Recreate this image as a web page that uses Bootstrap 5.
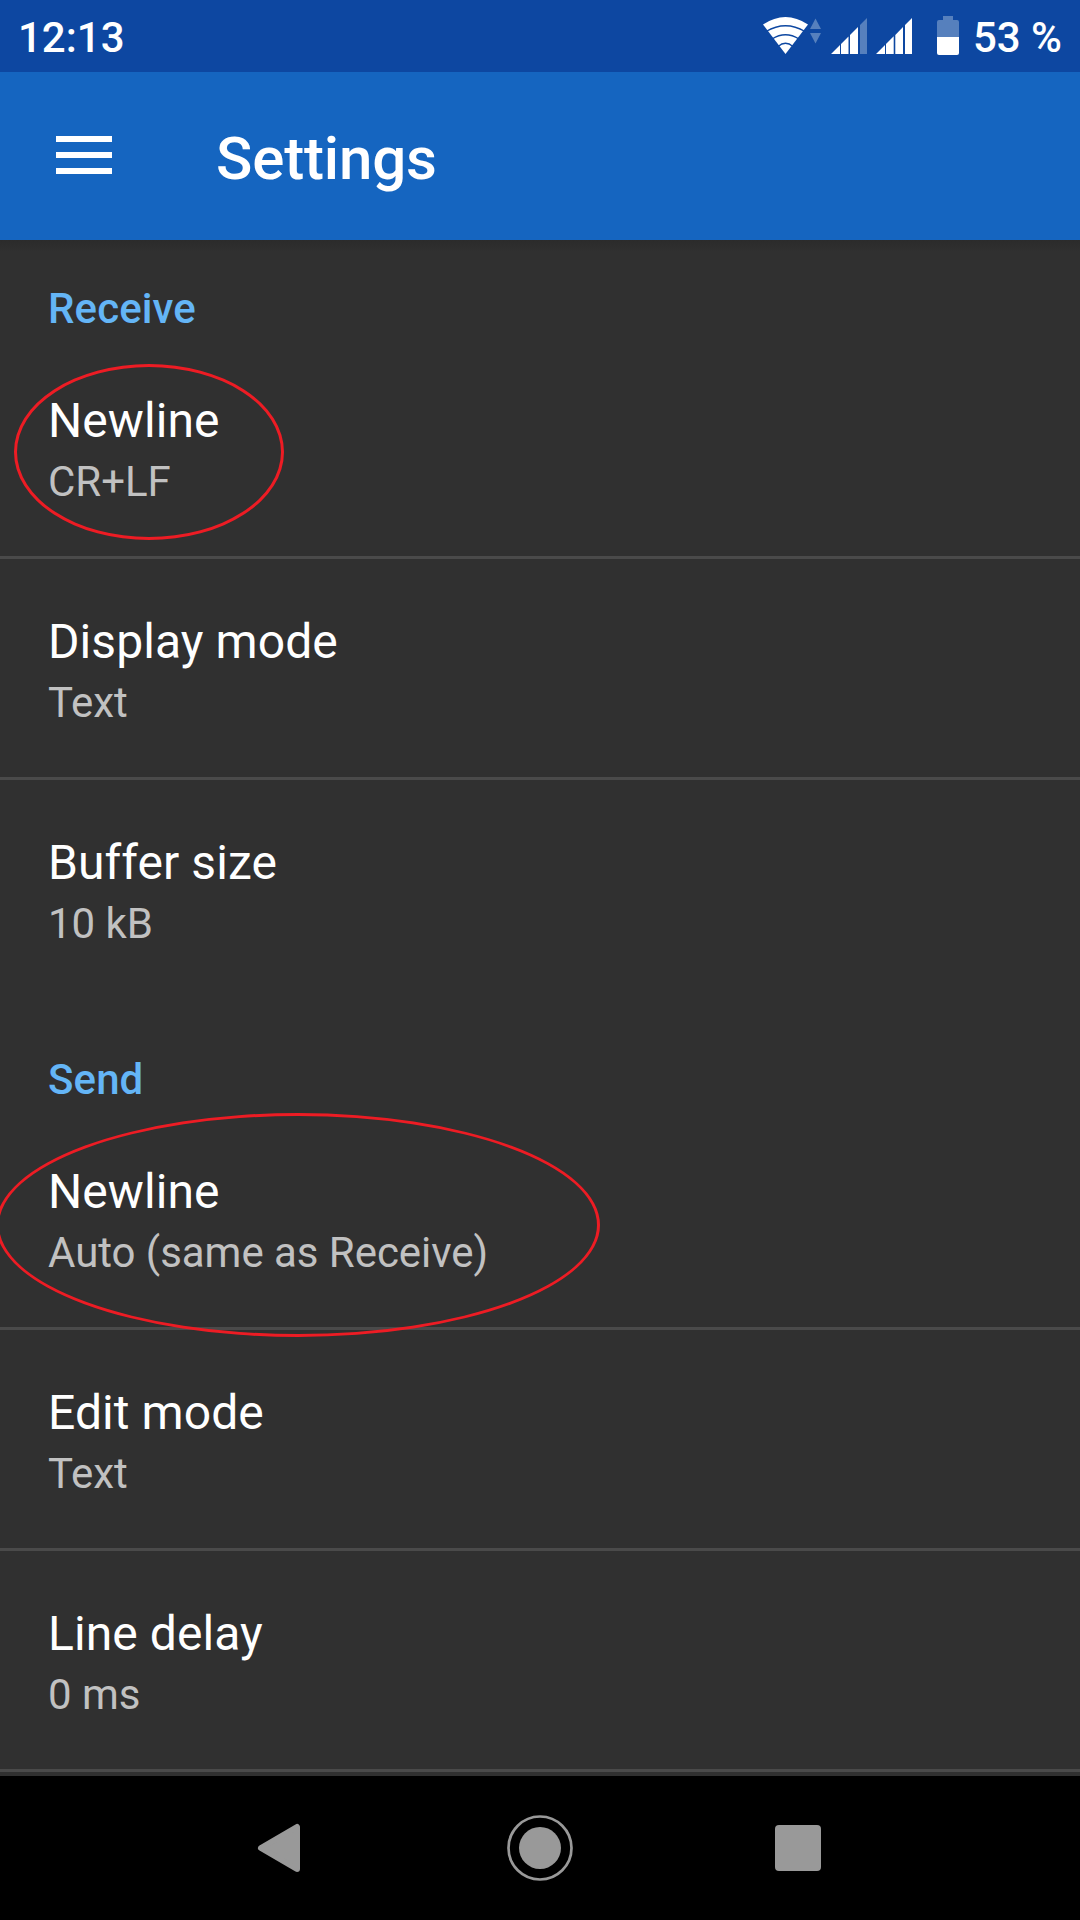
<!DOCTYPE html>
<html lang="en" data-bs-theme="dark">
<head>
<meta charset="utf-8">
<meta name="viewport" content="width=device-width, initial-scale=1">
<title>Settings</title>
<link href="https://cdn.jsdelivr.net/npm/bootstrap@5.3.0/dist/css/bootstrap.min.css" rel="stylesheet">
<style>
body { font-family: Roboto, "Liberation Sans", sans-serif; background: #303030; color: #fff; }
.screen { width: 1080px; height: 1920px; }
.status-bar { height: 72px; background: #0d47a1; font-size: 42px; line-height: 50px; font-weight: 500; padding: 0 18px; }
.status-bar span { padding-top: 4px; }
.status-bar svg { width: 215px; height: 72px; margin-right: 3px; }
.app-bar { height: 168px; background: #1565c0; padding: 0 56px; gap: 104px; }
.app-bar h1 { font-size: 60px; line-height: 72px; font-weight: 500; padding-top: 5px; letter-spacing: -.15px; }
.menu-btn { width: 56px; height: 38px; margin-top: -2px; }
.settings-pane { background: linear-gradient(#2b2b2b, #303030 12px); }
.group-title { color: #64b5f6; font-size: 42px; line-height: 57px; font-weight: 500; letter-spacing: .1px; padding: 53px 48px 1px; }
.first-group { padding-top: 40px; }
.list-group-flush > .setting.list-group-item { height: 221px; padding: 51px 48px 0; background: transparent; border: 0 solid #4a4a4a; border-bottom-width: 3px; color: #fff; }
.list-group-flush > .group-end.list-group-item { height: 218px; border-bottom-width: 0; }
.setting-name { font-size: 48px; line-height: 64px; letter-spacing: .08px; }
.setting-value { font-size: 42px; line-height: 57px; color: #c1c1c1; letter-spacing: -.04px; }
.marker { border: 3px solid #ed1c24; border-radius: 50%; pointer-events: none; }
.marker-receive { left: 14px; top: 26px; width: 270px; height: 176px; }
.marker-send { left: -4px; top: 4px; width: 604px; height: 224px; }
.nav-keys { height: 144px; background: #000; }
.nav-keys svg { width: 72px; height: 72px; }
.nav-keys .d-flex { gap: 184px; }
</style>
</head>
<body>
<div class="screen d-flex flex-column overflow-hidden">
  <header class="status-bar d-flex align-items-center justify-content-between flex-shrink-0">
    <span>12:13</span>
    <div class="d-flex align-items-center">
      <svg viewBox="755 0 215 72" aria-hidden="true">
        <path fill="#fff" d="M763 24.5Q785.500 9.500 808 24.500L785.500 54Z"/>
        <g fill="none" stroke="#0d47a1" stroke-width="1.300"><path d="M766 31.500Q785.500 20 805 31.500"/><path d="M772 39Q785.500 30.500 799 39"/><path d="M778 46.500Q785.500 40 793 46.500"/></g>
        <path fill="#5680bd" d="M810 29L815.500 18.500 821 29ZM810 33H821L815.500 43.500Z"/>
        <path fill="#fff" d="M831 54L840 45V54ZM841 54V44L848.500 36.500V54ZM850 54V35L858 27V54Z"/>
        <path fill="#5680bd" d="M860 54V25L867 18V54Z"/>
        <path fill="#fff" d="M876 54L885 45V54ZM886 54V44L893.700 36.300V54ZM895.300 54V35L903 27V54ZM905 54V25L912 18V54Z"/>
        <path fill="#5680bd" d="M937 37V22Q937 20 939 20H943V16H953V20H957Q959 20 959 22V37Z"/>
        <path fill="#fff" d="M937 37H959V53Q959 55 957 55H939Q937 55 937 53Z"/>
      </svg>
      <span>53 %</span>
    </div>
  </header>
  <nav class="app-bar d-flex align-items-center flex-shrink-0">
    <button class="menu-btn btn p-0 border-0 d-flex" aria-label="Menu">
      <svg width="56" height="38" viewBox="0 0 56 38" fill="#fff"><path d="M0 0H56V6H0ZM0 16H56V22H0ZM0 32H56V38H0Z"/></svg>
    </button>
    <h1 class="mb-0">Settings</h1>
  </nav>
  <main class="settings-pane flex-grow-1 overflow-hidden">
    <h2 class="group-title first-group mb-0">Receive</h2>
    <div class="list-group list-group-flush">
      <div class="setting list-group-item position-relative">
        <div class="setting-name">Newline</div>
        <div class="setting-value">CR+LF</div>
        <div class="marker marker-receive position-absolute"></div>
      </div>
      <div class="setting list-group-item">
        <div class="setting-name">Display mode</div>
        <div class="setting-value">Text</div>
      </div>
      <div class="setting group-end list-group-item">
        <div class="setting-name">Buffer size</div>
        <div class="setting-value">10 kB</div>
      </div>
    </div>
    <h2 class="group-title mb-0">Send</h2>
    <div class="list-group list-group-flush">
      <div class="setting list-group-item position-relative z-1">
        <div class="setting-name">Newline</div>
        <div class="setting-value">Auto (same as Receive)</div>
        <div class="marker marker-send position-absolute"></div>
      </div>
      <div class="setting list-group-item">
        <div class="setting-name">Edit mode</div>
        <div class="setting-value">Text</div>
      </div>
      <div class="setting list-group-item">
        <div class="setting-name">Line delay</div>
        <div class="setting-value">0 ms</div>
      </div>
    </div>
  </main>
  <footer class="nav-keys d-flex align-items-center justify-content-center flex-shrink-0">
    <div class="d-flex">
      <svg viewBox="0 0 72 72"><path fill="#999" stroke="#999" stroke-width="6" stroke-linejoin="round" d="M13 36L49 15V57Z"/></svg>
      <svg viewBox="0 0 72 72"><circle cx="36" cy="36" r="31.500" fill="none" stroke="#999" stroke-width="2.700"/><circle cx="36" cy="36" r="21" fill="#999"/></svg>
      <svg viewBox="0 0 72 72"><rect x="15" y="13" width="46" height="46" rx="4" fill="#999"/></svg>
    </div>
  </footer>
</div>
<script src="https://cdn.jsdelivr.net/npm/bootstrap@5.3.0/dist/js/bootstrap.bundle.min.js"></script>
</body>
</html>
